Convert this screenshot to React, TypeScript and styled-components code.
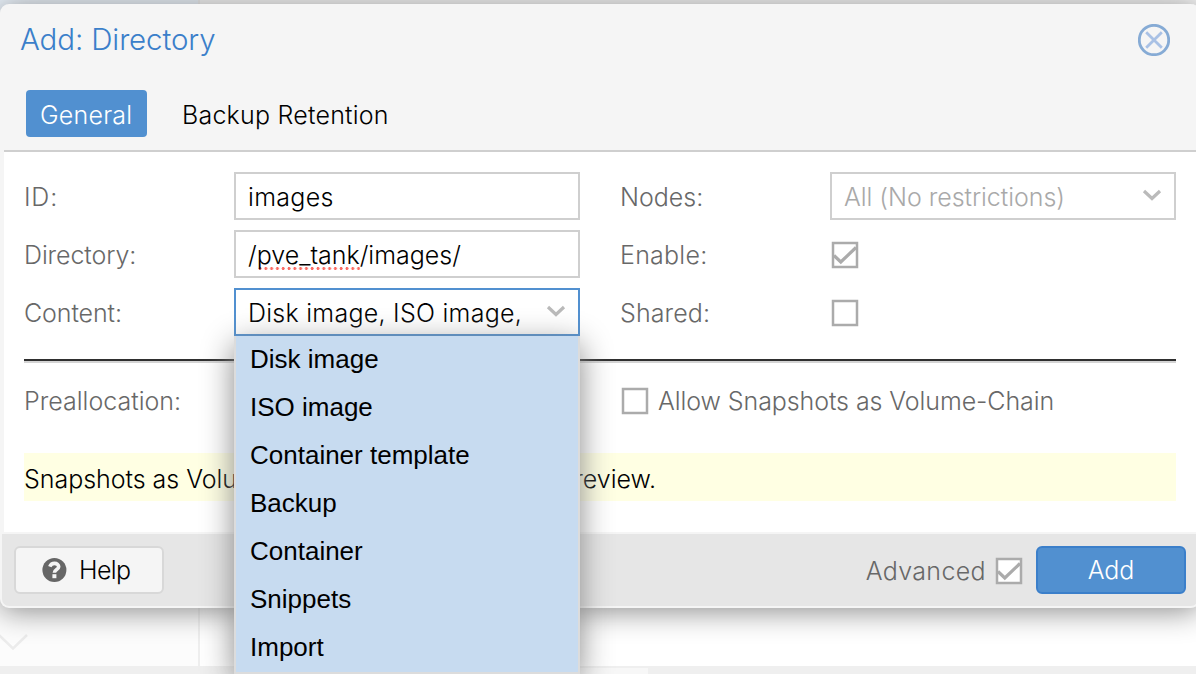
import React from "react";
import styled, { createGlobalStyle } from "styled-components";

const GlobalStyle = createGlobalStyle`
  * { box-sizing: border-box; }
  html, body { margin: 0; height: 100%; overflow: hidden; }
  body { font-family: Inter, "Liberation Sans", sans-serif; font-weight: 300; font-size: 25px; color: #000; }
`;

const Screen = styled.div`
  position: relative;
  width: 1196px;
  height: 674px;
  overflow: hidden;
  display: flex;
  flex-direction: column;
  background: #fff;
`;

const Backdrop = styled.div`
  flex: 1;
  display: grid;
  grid-template-columns: 200px 1fr;
  grid-template-rows: 12px 1fr 8px;
`;

const TreeHead = styled.div`
  background: #e6eff8;
  border-right: 2px solid #e8e8e8;
`;

const MainHead = styled.div`
  background: #f4f4f4;
`;

const TreePane = styled.div`
  display: flex;
  align-items: flex-end;
  background: #fcfcfc;
  border-right: 2px solid #efefef;
  padding-bottom: 13px;
`;

const StatusBar = styled.div`
  grid-column: 1 / -1;
  display: flex;
  padding: 2px 0 0 560px;
  background: #efefef;
`;

const StatusTab = styled.div`
  width: 88px;
  background: #f7f7f7;
`;

const Dialog = styled.div`
  position: absolute;
  left: 0;
  top: 4px;
  width: 1200px;
  height: 604px;
  display: flex;
  flex-direction: column;
  border: 2px solid #f5f5f5;
  border-top: 0;
  border-radius: 9px;
  background: #f5f5f5;
  box-shadow: 0 3px 30px #888;
`;

const Header = styled.header`
  height: 72px;
  display: flex;
  align-items: center;
  justify-content: space-between;
  padding: 0 28px 0 18px;
`;

const Title = styled.h1`
  margin: 0 0 1px;
  font-size: 29.5px;
  font-weight: 300;
  line-height: 35px;
  letter-spacing: -0.12px;
  color: #3b7fca;
`;

const Tabs = styled.nav`
  height: 76px;
  margin: 0 2px;
  display: flex;
  align-items: flex-start;
  gap: 20px;
  padding: 14px 0 0 22px;
  border-bottom: 2px solid #cfcfcf;
`;

const Tab = styled.div<{ $active?: boolean }>`
  height: 47px;
  line-height: 50px;
  padding: 0 ${(p) => (p.$active ? 14 : 15)}px;
  border-radius: 4px;
  letter-spacing: 0.22px;
  background: ${(p) => (p.$active ? "#5190d0" : "transparent")};
  color: ${(p) => (p.$active ? "#fff" : "#000")};
  width: ${(p) => (p.$active ? "121px" : "auto")};
`;

const Body = styled.main`
  height: 380px;
  margin: 0 2px;
  padding: 20px 20px 0;
  background: #fff;
`;

const Columns = styled.div`
  display: grid;
  grid-template-columns: 556px 556px;
  column-gap: 40px;
`;

const Column = styled.div`
  display: flex;
  flex-direction: column;
  gap: 10px;
`;

const FieldRow = styled.div`
  display: flex;
  align-items: center;
  height: 48px;
`;

const Label = styled.label<{ $spacing?: number }>`
  width: 210px;
  line-height: 48px;
  padding-top: 2px;
  color: #686868;
  letter-spacing: ${(p) => p.$spacing ?? 0}px;
`;

const InputBox = styled.div<{ $focused?: boolean; $muted?: boolean; $spacing?: number }>`
  width: 346px;
  height: 48px;
  display: flex;
  align-items: center;
  justify-content: space-between;
  padding: 2px 12px 0;
  border: 2px solid ${(p) => (p.$focused ? "#5190d0" : "#cfcfcf")};
  background: #fff;
  color: ${(p) => (p.$muted ? "#a9a9a9" : "#000")};
  letter-spacing: ${(p) => p.$spacing ?? 0}px;
  white-space: nowrap;
`;

const Misspelled = styled.span`
  background: radial-gradient(circle at 3px 1.5px, #fb6a62 1.2px, transparent 1.8px) 0 100% / 5.8px 3px repeat-x;
`;

const Trigger = styled.svg`
  margin-top: -4px;
`;

const Rule = styled.hr`
  height: 4px;
  margin: 23px 0 14px;
  border: 0;
  border-top: 2px solid #2f2f2f;
  background: #d4d4d4;
`;

const CheckLabel = styled.span<{ $spacing?: number }>`
  line-height: 48px;
  padding-top: 2px;
  color: #686868;
  letter-spacing: ${(p) => p.$spacing ?? 0}px;
`;

const VolumeChain = styled.div`
  display: flex;
  align-items: center;
  gap: 8px;
  height: 46px;
`;

const Preallocation = styled.div`
  height: 46px;
  display: flex;
  align-items: center;
`;

const Notice = styled.p`
  margin: 30px 0 0;
  height: 48px;
  line-height: 52px;
  letter-spacing: -0.03px;
  background: #ffffe3;
  white-space: nowrap;
`;

const Footer = styled.footer`
  height: 74px;
  display: flex;
  align-items: center;
  border-top: 2px solid #f5f5f5;
  border-radius: 0 0 7px 7px;
  background: #e6e6e6;
  padding: 0 12px;
`;

const Button = styled.button<{ $primary?: boolean }>`
  width: 150px;
  height: 48px;
  display: flex;
  align-items: center;
  justify-content: ${(p) => (p.$primary ? "center" : "flex-start")};
  gap: 12px;
  padding: 0 0 0 ${(p) => (p.$primary ? 0 : 26)}px;
  border: 2px solid ${(p) => (p.$primary ? "#3b7fca" : "#d8d8d8")};
  border-radius: 6px;
  background: ${(p) => (p.$primary ? "#5190d0" : "#f5f5f5")};
  color: ${(p) => (p.$primary ? "#fff" : "#000")};
  font: inherit;
  letter-spacing: ${(p) => (p.$primary ? -0.1 : -0.6)}px;
`;

const Advanced = styled.div`
  margin-left: auto;
  margin-right: 12px;
  display: flex;
  align-items: center;
  gap: 8px;
`;

const Menu = styled.ul`
  position: absolute;
  left: 234px;
  top: 336px;
  width: 346px;
  height: 338px;
  margin: 0;
  padding: 0;
  list-style: none;
  border: 2px solid #dcdcdc;
  border-top: 0;
  background: #c7dbf0;
  box-shadow: 0 8px 30px #888;
`;

const Option = styled.li`
  height: 48px;
  line-height: 47px;
  padding-left: 14px;
  font-family: "Liberation Sans", Arial, sans-serif;
  font-size: 26px;
  font-weight: 400;
`;

const Chevron = () => (
  <Trigger width="20" height="14" viewBox="0 0 20 14" fill="none">
    <path d="M2 3L10 10.5L18 3" stroke="#bababa" strokeWidth="3.2" />
  </Trigger>
);

const Box = styled.svg<{ $shift?: number }>`
  flex: none;
  margin-top: ${(p) => p.$shift ?? 2}px;
`;

const CheckBox = ({ checked, shift }: { checked?: boolean; shift?: number }) => (
  <Box $shift={shift} width="30" height="30" viewBox="0 0 30 30" fill="none">
    <rect x="3" y="3" width="24" height="24" fill="#fff" stroke="#ababab" strokeWidth="2.5" />
    {checked && <path d="M4 15.5L10.8 22L26 7.5" stroke="#ababab" strokeWidth="3.2" />}
  </Box>
);

const CloseIcon = () => (
  <svg width="32" height="32" viewBox="0 0 32 32" fill="none">
    <circle cx="16" cy="16" r="14.7" stroke="#86abd5" strokeWidth="2.8" />
    <path d="M8.2 8.2L23.8 23.8M23.8 8.2L8.2 23.8" stroke="#a9c1e5" strokeWidth="2.8" />
  </svg>
);

const HelpIcon = () => (
  <svg width="25" height="24" viewBox="0 0 25 24" fill="none">
    <circle cx="12.4" cy="12" r="12" fill="#666" />
    <path d="M7.8 8.6C8.8 6.2 10.4 5.4 12.5 5.4C15 5.4 16.7 6.8 16.7 8.8C16.7 11.7 12.4 11.4 12.4 14.8" stroke="#f5f5f5" strokeWidth="3.6" />
    <rect x="10.4" y="16.2" width="4" height="4" fill="#f5f5f5" />
  </svg>
);

const TreeArrow = () => (
  <svg width="30" height="20" viewBox="0 0 30 20" fill="none">
    <path d="M-1 2L13 15.5L27 2" stroke="#ececec" strokeWidth="2.5" />
  </svg>
);

const options = ["Disk image", "ISO image", "Container template", "Backup", "Container", "Snippets", "Import"];

export default function App() {
  return (
    <Screen>
      <GlobalStyle />
      <Backdrop>
        <TreeHead />
        <MainHead />
        <TreePane><TreeArrow /></TreePane>
        <div />
        <StatusBar><StatusTab /></StatusBar>
      </Backdrop>
      <Dialog>
        <Header>
          <Title>Add: Directory</Title>
          <CloseIcon />
        </Header>
        <Tabs>
          <Tab $active>General</Tab>
          <Tab>Backup Retention</Tab>
        </Tabs>
        <Body>
          <Columns>
            <Column>
              <FieldRow>
                <Label $spacing={0.8}>ID:</Label>
                <InputBox $spacing={0.3}>images</InputBox>
              </FieldRow>
              <FieldRow>
                <Label $spacing={-0.1}>Directory:</Label>
                <InputBox><span>/<Misspelled>pve_tank</Misspelled>/images/</span></InputBox>
              </FieldRow>
              <FieldRow>
                <Label $spacing={-0.1}>Content:</Label>
                <InputBox $focused $spacing={0.26}>Disk image, ISO image,<Chevron /></InputBox>
              </FieldRow>
            </Column>
            <Column>
              <FieldRow>
                <Label>Nodes:</Label>
                <InputBox $muted $spacing={-0.05}>All (No restrictions)<Chevron /></InputBox>
              </FieldRow>
              <FieldRow>
                <Label $spacing={0.25}>Enable:</Label>
                <CheckBox checked />
              </FieldRow>
              <FieldRow>
                <Label $spacing={0.1}>Shared:</Label>
                <CheckBox />
              </FieldRow>
            </Column>
          </Columns>
          <Rule />
          <Columns>
            <Preallocation>
              <Label>Preallocation:</Label>
            </Preallocation>
            <VolumeChain>
              <CheckBox shift={1} />
              <CheckLabel $spacing={-0.08}>Allow Snapshots as Volume-Chain</CheckLabel>
            </VolumeChain>
          </Columns>
          <Notice>Snapshots as Volume-Chain are a technology preview.</Notice>
        </Body>
        <Footer>
          <Button><HelpIcon />Help</Button>
          <Advanced>
            <CheckLabel $spacing={0.35}>Advanced</CheckLabel>
            <CheckBox checked />
          </Advanced>
          <Button $primary>Add</Button>
        </Footer>
      </Dialog>
      <Menu>
        {options.map((o) => <Option key={o}>{o}</Option>)}
      </Menu>
    </Screen>
  );
}
